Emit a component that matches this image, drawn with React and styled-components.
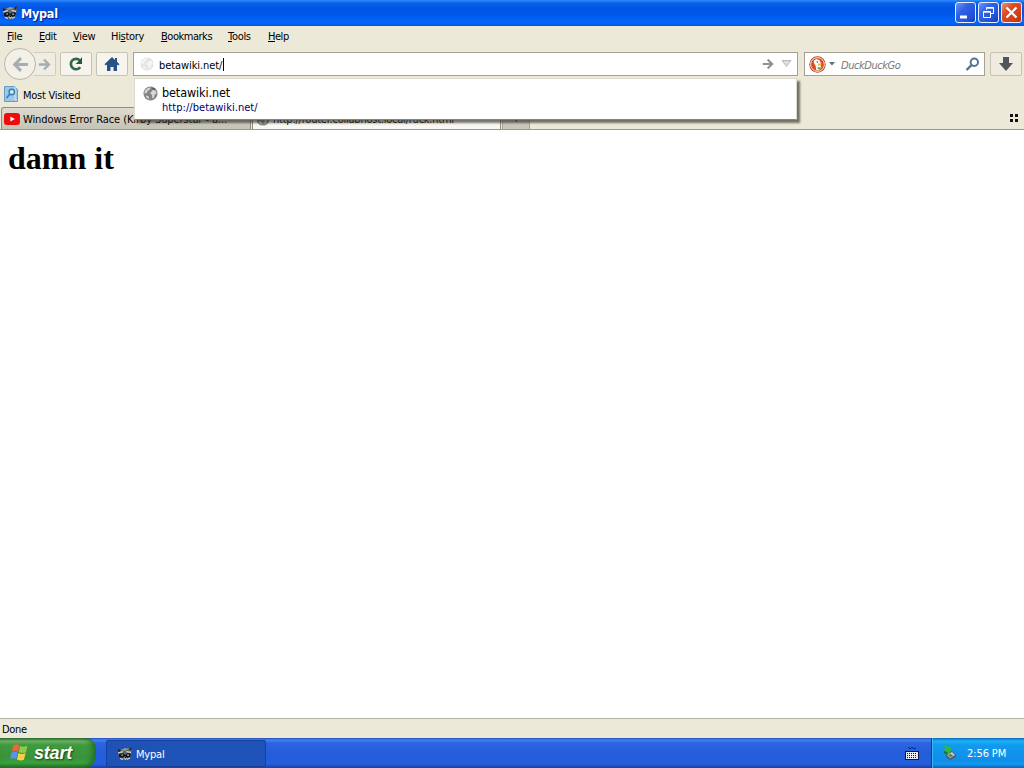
import React, { useState } from "react";
import styled, { createGlobalStyle } from "styled-components";

const menus = [
    { key: "F", pre: "", post: "ile", width: 32 },
    { key: "E", pre: "", post: "dit", width: 34 },
    { key: "V", pre: "", post: "iew", width: 38 },
    { key: "s", pre: "Hi", post: "tory", width: 50 },
    { key: "B", pre: "", post: "ookmarks", width: 67 },
    { key: "T", pre: "", post: "ools", width: 40 },
    { key: "H", pre: "", post: "elp", width: 38 },
];

const Raccoon = () => (
    <svg width="16" height="16" viewBox="0 0 16 16">
        <path d="M1 5l3-2 3 0 4-1 2 0 2-1 0 4-1 5-3 4-5 0-4-3-1-3z" fill="#59636a" />
        <path d="M1 3l3 1-3 3zM15 1l-3 2 2 2z" fill="#20252b" />
        <path d="M4 4l4-2 4 1-4 2z" fill="#8f9894" />
        <path d="M2 8l4-1 2 2 3-2 3 1-1 3-3 1-2-2-3 2-3-1z" fill="#11161c" />
        <path d="M1 7l5-1.3M9.5 5.7l4.5.6M3 12.5l3 .8M10 13.3l3-1.3" stroke="#d5dad3" strokeWidth="1.2" fill="none" />
        <path d="M4.3 9.3l1.6-.6M10.3 8.9l1.6.5" stroke="#c9cdc8" strokeWidth="1.2" />
        <path d="M6.5 12l1.8-1 2 1-1.8 2.2z" fill="#c5cac4" />
        <path d="M7.4 11h2l-1 1.6z" fill="#000" />
    </svg>
);

const Globe = ({ size = 15, faint }) => (
    <svg width={size} height={size} viewBox="0 0 16 16" opacity={faint ? 0.2 : 1}>
        <circle cx="8" cy="8" r="7.5" fill="#858585" />
        <path d="M2 5l3-3 3-.5-1 2.5-2 1-1 2.5-2.5 .5zM8.5 7l2-3 3 1 1 3-2 1-1 4-1.5 0-.5-4-2-1zM3 10l3 1 .5 3-3-2z" fill="#d6d6d6" />
        <path d="M10 2l2 0 1 2-3 0z" fill="#555" />
    </svg>
);

const Arrow = ({ size = 16, flip, color = "#a6acb4" }) => (
    <svg width={size} height={size} viewBox="0 0 16 16">
        <g transform={flip ? "translate(16 0) scale(-1 1)" : undefined}>
            <path d="M1 8h12M7.5 2l6 6-6 6" stroke={color} strokeWidth="2.8" fill="none" />
        </g>
    </svg>
);

const Reload = () => (
    <svg width="16" height="16" viewBox="0 0 16 16">
        <path d="M12.2 11.2A5.2 5.2 0 1 1 11.8 4.4" stroke="#32684b" strokeWidth="2.6" fill="none" />
        <path d="M14 1v7H7.6l2.7-2.6z" fill="#245a3b" />
    </svg>
);

const Home = () => (
    <svg width="16" height="16" viewBox="0 0 16 16">
        <path d="M8 1L.5 8.2 2 9.5 3 8.6V15h3.5v-4h3v4H13V8.6l1 .9 1.5-1.3L13 5.8V2h-2v1.9z" fill="#285187" />
    </svg>
);

const Duck = () => (
    <svg width="17" height="17" viewBox="0 0 17 17">
        <circle cx="8.5" cy="8.5" r="8.2" fill="#b5401f" />
        <circle cx="8.5" cy="8.5" r="6.9" fill="#dc4f26" stroke="#fbe9df" strokeWidth="1" />
        <path d="M5 4.5l2.5-1.5 3 1.2 1.4 3-.4 2 1 2.5-2 2.3-3 .6-1-5-1.7-2.6z" fill="#fff" />
        <path d="M9 7.5l4 .3-1.6 1.7H9z" fill="#f6b526" />
        <path d="M8.5 11l4 .6-1.6 2.2-2-.8z" fill="#58a846" />
        <circle cx="8.3" cy="6" r=".7" fill="#28364e" />
    </svg>
);

const Magnifier = () => (
    <svg width="15" height="15" viewBox="0 0 15 15">
        <circle cx="9.3" cy="5.3" r="3.7" fill="#fff" stroke="#4d7495" strokeWidth="2" />
        <path d="M6.5 8.2L1.5 13" stroke="#4d7495" strokeWidth="2.4" />
    </svg>
);

const Download = () => (
    <svg width="16" height="16" viewBox="0 0 16 16">
        <path d="M5 1h6v6h4l-7 8-7-8h4z" fill="#4e575d" />
    </svg>
);

const MostVisited = () => (
    <svg width="15" height="16" viewBox="0 0 15 16">
        <path d="M.5.5h10l3 3v12H.5z" fill="#9cc7e6" stroke="#669dc4" />
        <path d="M11 1v13h2" stroke="#d3e8f5" fill="none" />
        <circle cx="7.8" cy="6" r="2.7" fill="#d3e8f5" stroke="#3c7eac" strokeWidth="1.5" />
        <path d="M6 8l-3.5 4" stroke="#3c7eac" strokeWidth="1.8" />
    </svg>
);

const Youtube = () => (
    <svg width="16" height="12" viewBox="0 0 16 12">
        <rect width="16" height="12" rx="3" fill="#f00b0b" />
        <path d="M6.4 3.4v5L10.8 6z" fill="#fff" />
    </svg>
);

const Flag = () => (
    <svg width="19" height="19" viewBox="0 0 18 18">
        <path d="M3.2 2.2Q6 .2 8.9 2.2L7.5 8.3Q4.8 6.5 1.7 8.2z" fill="#ef643c" />
        <path d="M9.6 2.7Q12.5 4.5 16.6 2.6L15 8.9Q11.8 10.2 8.2 8.6z" fill="#8fca48" />
        <path d="M1.5 9Q4.5 7.4 7.3 9.1L5.9 15.2Q3.2 13.6.1 15.1z" fill="#5c91ec" />
        <path d="M8 9.5Q11 11.3 14.8 9.8L13.2 15.9Q9.8 17.2 6.6 15.6z" fill="#fad047" />
    </svg>
);

const Keyboard = () => (
    <svg width="14" height="15" viewBox="0 0 14 15">
        <path d="M3 1l2 2 2-2 2 2 2-1" stroke="#122460" fill="none" />
        <path d="M0 5h14v9H0z" fill="#10143c" />
        <path d="M1 6h12v7H1z" fill="#e8ebf4" />
        <path d="M2 7.5h10M2 9.5h10M2 11.5h10" stroke="#10143c" strokeDasharray="1 1" />
    </svg>
);

const SafelyRemove = () => (
    <svg width="16" height="16" viewBox="0 0 16 16">
        <path d="M4 10l6-4 4 4v2l-6 3-4-3z" fill="#4f6260" />
        <path d="M5 10l5-3 3 3-5 3z" fill="#c2cbc9" />
        <path d="M8 9l3 1-2 2-3-1z" fill="#596f7a" />
        <path d="M1 1l8 1 0 3-3 5-1-3L2 6l2-2z" fill="#35b738" />
        <path d="M2 6l3 1 1 3-4-2z" fill="#1c7238" />
    </svg>
);

export default function App() {
    const [address, setAddress] = useState("betawiki.net/");

    return (
        <Desktop>
            <GlobalStyle />
            <TitleBar>
                <Raccoon />
                <Title>Mypal</Title>
                <WindowButtons>
                    <WindowButton aria-label="Minimize">
                        <svg width="19" height="19"><path d="M4 14h7" stroke="#fff" strokeWidth="3" /></svg>
                    </WindowButton>
                    <WindowButton aria-label="Restore">
                        <svg width="19" height="19" fill="none" stroke="#fff">
                            <path d="M7.5 7V4.5h7v6H12M7 5.2h8M4.5 8.5h7v6h-7zM4 9.2h8" />
                        </svg>
                    </WindowButton>
                    <WindowButton $close aria-label="Close">
                        <svg width="19" height="19"><path d="M4.5 4.5l10 10M14.5 4.5l-10 10" stroke="#fff" strokeWidth="2.2" /></svg>
                    </WindowButton>
                </WindowButtons>
            </TitleBar>

            <MenuBar>
                {menus.map((m) => (
                    <MenuItem key={m.key} $width={m.width}>{m.pre}<u>{m.key}</u>{m.post}</MenuItem>
                ))}
            </MenuBar>

            <NavBar>
                <BackButton><Arrow flip size={17} /></BackButton>
                <ForwardButton><Arrow size={13} /></ForwardButton>
                <ToolButton $gap={4}><Reload /></ToolButton>
                <ToolButton $gap={4}><Home /></ToolButton>
                <AddressBar>
                    <Globe size={14} faint />
                    <AddressText value={address} onChange={(e) => setAddress(e.target.value)} size="14" />
                    <Caret />
                    <FieldEnd>
                        <Arrow size={12} color="#929292" />
                        <svg width="11" height="8"><path d="M1 .5h9L5.5 6.5z" fill="#ddd" stroke="#bbb" /></svg>
                    </FieldEnd>
                    <Popup>
                        <Globe size={15} />
                        <div>
                            <ResultTitle>betawiki.net</ResultTitle>
                            <ResultUrl>http://betawiki.net/</ResultUrl>
                        </div>
                    </Popup>
                </AddressBar>
                <SearchBar>
                    <Duck />
                    <svg width="6" height="4"><path d="M0 0h6L3 3.5z" fill="#607078" /></svg>
                    <Placeholder>DuckDuckGo</Placeholder>
                    <Magnifier />
                </SearchBar>
                <ToolButton $gap={5} $flat><Download /></ToolButton>
            </NavBar>

            <Bookmarks><MostVisited /><BookmarkLabel>Most Visited</BookmarkLabel></Bookmarks>

            <TabStrip>
                <Tab $width={250}><Youtube /><TabLabel $spacing={-0.09}>Windows Error Race (Kirby Superstar - a...</TabLabel></Tab>
                <Tab $width={249} $active><Globe size={14} /><TabLabel $spacing={-0.23}>http://router.collabhost.local/ruck.html</TabLabel></Tab>
                <NewTab>+</NewTab>
                <TabList>
                    <svg width="9" height="8" fill="#111"><path d="M0 0h3v3H0zM5 0h3v3H5zM0 5h3v3H0zM5 5h3v3H5z" /></svg>
                </TabList>
            </TabStrip>

            <Content><h1>damn it</h1></Content>
            <StatusBar>Done</StatusBar>

            <TaskBar>
                <StartButton><Flag /><span>start</span></StartButton>
                <TaskButton><Raccoon /><span>Mypal</span></TaskButton>
                <LanguageBar><Keyboard /></LanguageBar>
                <Tray><SafelyRemove /><Clock>2:56 PM</Clock></Tray>
            </TaskBar>
        </Desktop>
    );
}

const GlobalStyle = createGlobalStyle`
    * {
        box-sizing: border-box;
    }
    body {
        margin: 0;
        overflow: hidden;
    }
    svg {
        display: block;
        flex-shrink: 0;
    }
`;

const Desktop = styled.div`
    width: 1024px;
    height: 768px;
    display: flex;
    flex-direction: column;
    overflow: hidden;
    background: #ece9d8;
    color: #000;
    font-family: "DejaVu Sans Condensed", "DejaVu Sans", sans-serif;
    font-stretch: condensed;
    font-size: 11px;
    letter-spacing: -0.5px;
    white-space: nowrap;
`;

const TitleBar = styled.header`
    height: 26px;
    flex: none;
    display: flex;
    align-items: center;
    padding: 0 2px 1px;
    background: linear-gradient(#2f8bff 0, #0a63ec 3px, #0054e3 8px, #0058ea 15px, #0266fc 21px, #0162f4 24px, #0050d4 100%);
`;

const Title = styled.span`
    margin-left: 3px;
    padding-top: 2px;
    color: #fff;
    font-size: 12.5px;
    font-weight: bold;
    letter-spacing: -0.25px;
    text-shadow: 1px 1px 1px #0a1883;
`;

const WindowButtons = styled.div`
    display: flex;
    gap: 2px;
    margin-left: auto;
`;

const WindowButton = styled.button`
    width: 21px;
    height: 21px;
    padding: 0;
    border: 1px solid #e8eeff;
    border-radius: 3px;
    background: ${({ $close }) => $close
        ? "linear-gradient(135deg, #eb9172, #de4b25 35%, #d43f13 75%, #b7300e)"
        : "linear-gradient(135deg, #6d98fa, #3163e4 35%, #2152dc 75%, #153bb4)"};
`;

const MenuBar = styled.nav`
    height: 22px;
    flex: none;
    display: flex;
    align-items: center;
    padding: 0 0 2px 7px;
`;

const MenuItem = styled.span`
    width: ${({ $width }) => $width}px;
    letter-spacing: -0.47px;
    u {
        text-underline-offset: 1px;
    }
    &:nth-child(1),
    &:nth-child(3),
    &:nth-child(4),
    &:nth-child(6) {
        letter-spacing: -0.3px;
    }
`;

const NavBar = styled.div`
    height: 32px;
    flex: none;
    display: flex;
    align-items: center;
    padding: 0 2px 0 4px;
    & > * {
        flex-shrink: 0;
    }
`;

const BackButton = styled.button`
    width: 32px;
    height: 32px;
    display: grid;
    place-items: center;
    padding: 0;
    border: 1px solid #b9b6aa;
    border-radius: 50%;
    background: #f3f1e7;
    z-index: 1;
`;

const ForwardButton = styled.button`
    width: 22px;
    height: 24px;
    margin-left: -2px;
    display: grid;
    place-items: center;
    padding: 0;
    border: 1px solid #d0cdbf;
    border-left: 0;
    border-radius: 0 2px 2px 0;
    background: #f0eee3;
`;

const ToolButton = styled.button`
    width: 32px;
    height: 24px;
    margin-left: ${({ $gap }) => $gap}px;
    display: grid;
    place-items: center;
    padding: 0;
    border: 1px solid #c6c3b5;
    border-radius: 2px;
    background: ${({ $flat }) => ($flat ? "#efecdf" : "#f6f4ec")};
`;

const AddressBar = styled.div`
    position: relative;
    width: 665px;
    height: 24px;
    margin-left: 5px;
    display: flex;
    align-items: center;
    padding: 0 5px 0 6px;
    border: 1px solid #a5a294;
    background: #fff;
`;

const AddressText = styled.input`
    width: 64px;
    margin-left: 5px;
    padding: 2px 0 0;
    border: 0;
    outline: 0;
    background: none;
    color: #000;
    font: inherit;
    letter-spacing: -0.08px;
`;

const Caret = styled.i`
    width: 1px;
    height: 13px;
    background: #000;
`;

const FieldEnd = styled.div`
    display: flex;
    align-items: center;
    gap: 7px;
    margin-left: auto;
`;

/* autocomplete list hangs below the field and covers the tabs */
const Popup = styled.div`
    position: absolute;
    top: 25px;
    left: 0;
    width: 663px;
    height: 42px;
    display: flex;
    gap: 4px;
    padding: 7px 0 0 8px;
    border: 1px solid #dddbd0;
    border-bottom-color: #85837a;
    background: #fff;
    box-shadow: 3px 3px 2px rgba(50, 50, 40, 0.65);
    z-index: 5;
`;

const ResultTitle = styled.div`
    font-size: 12.5px;
    line-height: 14px;
    letter-spacing: -0.1px;
`;

const ResultUrl = styled.div`
    line-height: 15px;
    color: #00006b;
    letter-spacing: 0.05px;
`;

const SearchBar = styled.div`
    width: 181px;
    height: 24px;
    margin-left: 6px;
    display: flex;
    align-items: center;
    gap: 3px;
    padding: 0 4px;
    border: 1px solid #a5a294;
    background: #fff;
`;

const Placeholder = styled.span`
    flex: 1;
    margin-left: 3px;
    padding-top: 2px;
    color: #777;
    font-style: italic;
    letter-spacing: -0.45px;
`;

const Bookmarks = styled.div`
    height: 27px;
    flex: none;
    display: flex;
    align-items: center;
    gap: 4px;
    padding: 1px 0 0 4px;
`;

const BookmarkLabel = styled.span`
    padding-top: 2px;
    letter-spacing: -0.25px;
`;

const TabStrip = styled.div`
    height: 23px;
    flex: none;
    display: flex;
    gap: 1px;
    padding-left: 1px;
    border-bottom: 1px solid #9c9a8e;
`;

const Tab = styled.div`
    width: ${({ $width }) => $width}px;
    height: 22px;
    display: flex;
    align-items: center;
    gap: 3px;
    padding-left: ${({ $active }) => ($active ? 3 : 2)}px;
    border: 1px solid #8f8d82;
    border-bottom: 0;
    border-radius: 3px 3px 0 0;
    background: ${({ $active }) => ($active ? "#f8f7f2" : "linear-gradient(#dedbd0, #c5c2b6)")};
`;

const TabLabel = styled.span`
    padding-top: 2px;
    letter-spacing: ${({ $spacing }) => $spacing}px;
`;

const NewTab = styled.div`
    width: 28px;
    text-align: center;
    line-height: 22px;
    border: 1px solid #a5a397;
    border-width: 1px 1px 0;
    background: #c9c6ba;
`;

const TabList = styled.div`
    margin: 7px 5px 0 auto;
`;

const Content = styled.main`
    flex: 1;
    padding: 10px 8px;
    background: #fff;
    h1 {
        margin: 0;
        font: bold 32px/36px "Liberation Serif", serif;
        letter-spacing: 0;
    }
`;

const StatusBar = styled.footer`
    height: 20px;
    flex: none;
    padding-left: 2px;
    border-top: 1px solid #b5b2a5;
    line-height: 21px;
    letter-spacing: -0.3px;
`;

const TaskBar = styled.div`
    height: 30px;
    flex: none;
    display: flex;
    background: linear-gradient(#1f4bb5 0, #4584f1 2px, #2c63e0 5px, #245ddb 15px, #245edc 26px, #1941a5 100%);
    color: #fff;
`;

const StartButton = styled.button`
    width: 96px;
    height: 30px;
    display: flex;
    align-items: center;
    gap: 5px;
    padding: 0 0 1px 10px;
    border: 0;
    border-radius: 0 10px 12px 0;
    background: linear-gradient(#2d6f2b 0, #72b56c 3px, #3f9a3e 7px, #38933a 20px, #3ba33c 25px, #246e27 100%);
    box-shadow: inset -4px 0 6px -1px #1d6a25;
    color: #fff;
    span {
        padding-top: 2px;
        font: italic bold 18px "Liberation Sans", sans-serif;
        letter-spacing: -0.2px;
        text-shadow: 1px 1px 2px #1c3c1c;
    }
`;

const TaskButton = styled.div`
    width: 160px;
    height: 27px;
    margin: 2px 0 0 10px;
    display: flex;
    align-items: center;
    gap: 3px;
    padding-left: 10px;
    border: 1px solid #173f9c;
    border-radius: 2px;
    background: #1e52b7;
    letter-spacing: -0.2px;
    span {
        padding-top: 1px;
    }
`;

const LanguageBar = styled.div`
    margin: 8px 12px 0 auto;
`;

const Tray = styled.div`
    width: 93px;
    display: flex;
    align-items: center;
    gap: 9px;
    padding-left: 10px;
    border-left: 1px solid #0a3c91;
    background: linear-gradient(#0b66bb 0, #1bb0f6 3px, #119bed 7px, #0f8eea 22px, #1298f0 26px, #0c62b7 100%);
    box-shadow: inset 1px 0 #35b9f5;
`;

const Clock = styled.span`
    letter-spacing: -0.1px;
`;
